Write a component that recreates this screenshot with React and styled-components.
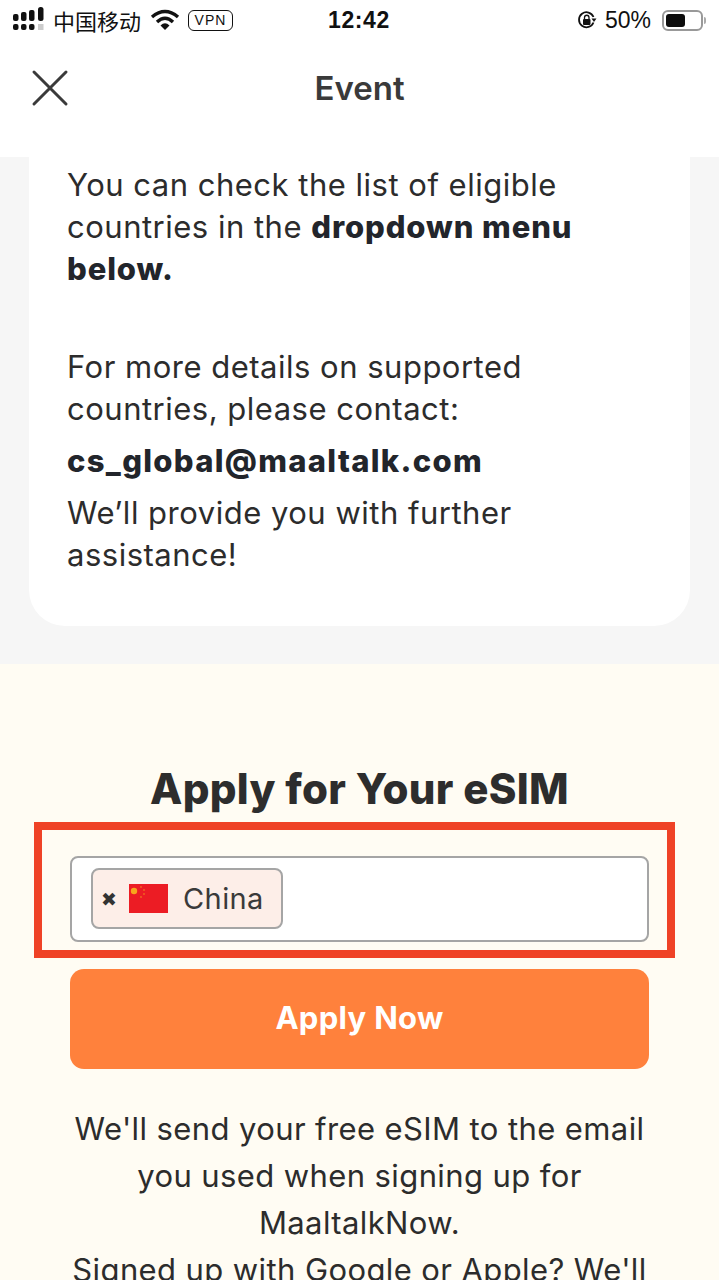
import React from "react";
import styled, { createGlobalStyle } from "styled-components";

const GlobalStyle = createGlobalStyle`
  html, body {
    margin: 0;
    padding: 0;
    height: 1280px;
    overflow: hidden;
    background: #fffcf3;
  }
  * { box-sizing: border-box; }
`;

const font = `"Inter", "Noto Sans", sans-serif`;
const cjk = `"Liberation Sans", "Noto Sans CJK SC", sans-serif`;

const App = () => (
  <Page>
    <GlobalStyle />
    <TopArea>
      <StatusBar>
        <StatusSide>
          <Signal width="36" height="24" viewBox="0 0 36 24">
            <g fill="#111">
              <rect x="1" y="8" width="5.5" height="7" rx="2" />
              <rect x="1" y="18" width="5.5" height="6" rx="2" />
              <rect x="9" y="6" width="5.5" height="9" rx="2" />
              <rect x="9" y="18" width="5.5" height="6" rx="2" />
              <rect x="17" y="4" width="5.5" height="11" rx="2" />
              <rect x="17" y="18" width="5.5" height="6" rx="2" />
              <rect x="26" y="1" width="5.5" height="14" rx="2.5" />
            </g>
            <rect x="26" y="18" width="5.5" height="6" fill="#ccc" />
          </Signal>
          <Carrier>中国移动</Carrier>
          <WifiIcon width="30" height="22" viewBox="0 0 30 22">
            <path d="M2 8 Q15 -3 28 8" fill="none" stroke="#111" strokeWidth="3.4" />
            <path d="M7 13 Q15 5.5 23 13" fill="none" stroke="#111" strokeWidth="3.4" />
            <path d="M10.5 16.5 Q15 12 19.5 16.5 L15 21 Z" fill="#111" />
          </WifiIcon>
          <VpnBadge>VPN</VpnBadge>
        </StatusSide>
        <Clock>12:42</Clock>
        <StatusRight>
          <svg width="20" height="20" viewBox="0 0 20 20">
            <path d="M16.5 12.5 A7.5 7.5 0 1 1 16.5 7" fill="none" stroke="#111" strokeWidth="1.8" />
            <path d="M14.5 8.5 L19.5 8.5 L17 12 Z" fill="#111" />
            <rect x="6" y="9" width="7.5" height="6" rx="1" fill="#111" />
            <path d="M7.5 9 V7.5 a2.2 2.2 0 0 1 4.5 0 V9" fill="none" stroke="#111" strokeWidth="1.3" />
          </svg>
          <Percent>50%</Percent>
          <Battery>
            <BatteryFill />
          </Battery>
          <BatteryTip />
        </StatusRight>
      </StatusBar>
      <Header>
        <CloseIcon width="38" height="38" viewBox="0 0 38 38">
          <path d="M3 3 L35 35 M35 3 L3 35" stroke="#3a3a3a" strokeWidth="3" strokeLinecap="round" />
        </CloseIcon>
        <Title>Event</Title>
      </Header>
    </TopArea>

    <GreySection>
      <Card>
        <Para>
          You can check the list of eligible countries in the <b>dropdown menu below.</b>
        </Para>
        <Para $top={56}>For more details on supported countries, please contact:</Para>
        <Email>cs_global@maaltalk.com</Email>
        <Para>We’ll provide you with further assistance!</Para>
      </Card>
    </GreySection>

    <CreamSection>
      <Heading>Apply for Your eSIM</Heading>
      <SelectBox>
        <Chip>
          <ChipRemove>✖</ChipRemove>
          <svg width="39" height="29" viewBox="0 0 39 29">
            <rect width="39" height="29" fill="#ec1c24" />
            <circle cx="5" cy="7" r="3.2" fill="#f7a51c" />
            <circle cx="12" cy="3" r="1" fill="#f0601f" />
            <circle cx="15" cy="6" r="1" fill="#f0601f" />
            <circle cx="15" cy="10" r="1" fill="#f0601f" />
            <circle cx="12" cy="13" r="1" fill="#f0601f" />
          </svg>
          <ChipLabel>China</ChipLabel>
        </Chip>
      </SelectBox>
      <ApplyButton>Apply Now</ApplyButton>
      <Note>
        We'll send your free eSIM to the email
        <br />
        you used when signing up for
        <br />
        MaaltalkNow.
        <br />
        Signed up with Google or Apple? We'll
      </Note>
      <Highlight />
    </CreamSection>
  </Page>
);

export default App;

const Page = styled.div`
  width: 719px;
  height: 1280px;
  overflow: hidden;
  font-family: ${font};
  color: #2b2b2b;
`;
const TopArea = styled.div`
  background: #fff;
  height: 157px;
`;
const StatusBar = styled.div`
  height: 40px;
  padding: 0 13px 0 12px;
  display: grid;
  grid-template-columns: 1fr auto 1fr;
  align-items: center;
  color: #111;
`;
const StatusSide = styled.div`
  display: flex;
  align-items: center;
`;
const StatusRight = styled(StatusSide)`
  justify-content: flex-end;
`;
const Signal = styled.svg`
  margin-top: -4px;
`;
const WifiIcon = styled.svg`
  margin-left: 9px;
`;
const Carrier = styled.span`
  font-family: ${cjk};
  font-size: 22px;
  margin-left: 5px;
`;
const VpnBadge = styled.span`
  margin-left: 8px;
  width: 45px;
  height: 21px;
  border: 1.5px solid #111;
  border-radius: 6px;
  font-family: "Liberation Sans", sans-serif;
  font-size: 14px;
  letter-spacing: 1px;
  display: flex;
  align-items: center;
  justify-content: center;
`;
const Clock = styled.span`
  font-family: "Liberation Sans", sans-serif;
  font-size: 23px;
  font-weight: 700;
  letter-spacing: 0.6px;
`;
const Percent = styled.span`
  font-family: "Liberation Sans", sans-serif;
  font-size: 23px;
  margin-left: 8px;
`;
const Battery = styled.div`
  margin-left: 11px;
  width: 41px;
  height: 21px;
  border: 2px solid #999;
  border-radius: 6px;
  padding: 2px;
`;
const BatteryFill = styled.div`
  width: 19px;
  height: 100%;
  background: #0c0c0c;
  border-radius: 3px;
`;
const BatteryTip = styled.div`
  margin-left: 1px;
  width: 2px;
  height: 7px;
  background: #aaa;
  border-radius: 0 2px 2px 0;
`;
const Header = styled.div`
  height: 117px;
  position: relative;
  display: flex;
  align-items: center;
  justify-content: center;
  padding-bottom: 21px;
`;
const CloseIcon = styled.svg`
  position: absolute;
  left: 31px;
  top: 29px;
`;
const Title = styled.h1`
  margin: 0;
  font-size: 33px;
  font-weight: 600;
  color: #3a3a3a;
`;
const GreySection = styled.div`
  background: #f6f6f6;
  height: 507px;
  padding: 0 29px;
`;
const Card = styled.div`
  height: 469px;
  background: #fff;
  border-radius: 0 0 36px 36px;
  padding: 7px 38px 0;
`;
const Para = styled.p`
  margin: ${(p) => p.$top || 0}px 0 0;
  font-size: 31px;
  line-height: 42px;
  letter-spacing: 0.5px;
  color: #2c2c2c;
  b {
    font-weight: 800;
    letter-spacing: 0.9px;
    color: #22252b;
  }
`;
const Email = styled.p`
  margin: 10px 0 10px;
  font-size: 31px;
  line-height: 42px;
  font-weight: 800;
  letter-spacing: 1.3px;
  color: #22252b;
`;
const CreamSection = styled.div`
  position: relative;
  background: #fffcf3;
  height: 616px;
  padding: 96px 70px 0;
`;
const Heading = styled.h2`
  margin: 0;
  height: 96px;
  font-size: 42px;
  line-height: 58px;
  font-weight: 800;
  letter-spacing: 0.3px;
  text-align: center;
  color: #2d2d2d;
`;
const SelectBox = styled.div`
  height: 86px;
  background: #fff;
  border: 2px solid #a5a5a5;
  border-radius: 8px;
  padding: 10px 19px;
`;
const Chip = styled.div`
  width: 192px;
  height: 61px;
  background: #fdeee8;
  border: 2px solid #a5a5a5;
  border-radius: 8px;
  display: flex;
  align-items: center;
  padding-left: 8px;
`;
const ChipRemove = styled.span`
  width: 28px;
  font-family: "DejaVu Sans", sans-serif;
  font-size: 19px;
  color: #333;
`;
const ChipLabel = styled.span`
  margin-left: 15px;
  font-size: 29px;
  letter-spacing: 0.4px;
  color: #3a3a3a;
`;
const ApplyButton = styled.button`
  display: block;
  width: 100%;
  height: 100px;
  margin-top: 27px;
  padding: 0 0 4px;
  border: 0;
  border-radius: 14px;
  background: #ff813c;
  color: #fff;
  font-family: ${font};
  font-size: 31px;
  font-weight: 700;
  letter-spacing: 0.3px;
`;
const Note = styled.p`
  margin: 36px -20px 0;
  font-size: 31px;
  line-height: 47px;
  letter-spacing: 0.4px;
  text-align: center;
  white-space: nowrap;
  color: #2c2c2c;
`;
const Highlight = styled.div`
  position: absolute;
  left: 34px;
  top: 158px;
  width: 641px;
  height: 136px;
  border: 8px solid #ef4226;
  pointer-events: none;
`;
